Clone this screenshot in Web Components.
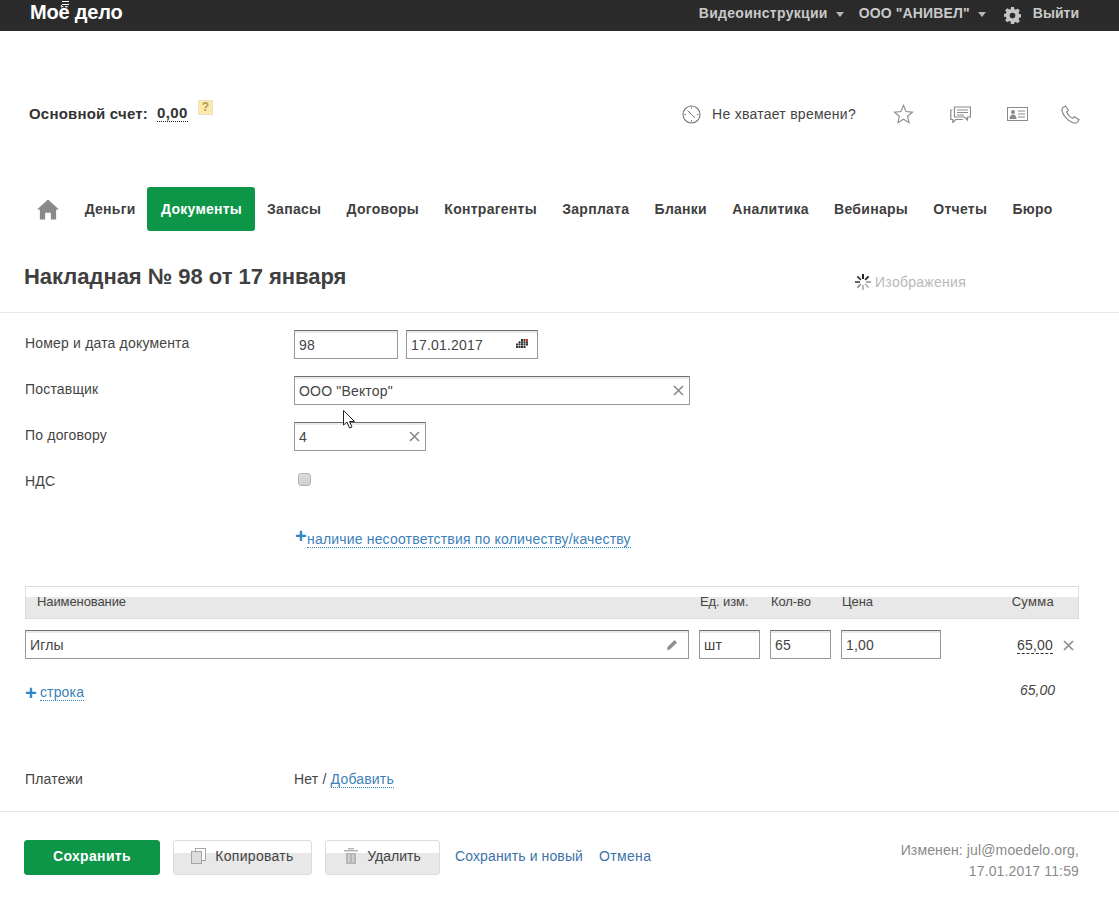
<!DOCTYPE html>
<html lang="ru"><head><meta charset="utf-8"><title>Накладная</title>
<style>
html,body{margin:0;padding:0;background:#fff}
body{font:14px "Liberation Sans",Arial,sans-serif;letter-spacing:.18px;color:#3f3f3f;width:1119px;height:915px;overflow:hidden;position:relative}
</style></head><body>
<app-topbar></app-topbar>
<app-balance></app-balance>
<app-nav></app-nav>
<doc-title></doc-title>
<doc-form></doc-form>
<doc-table></doc-table>
<doc-payments></doc-payments>
<doc-footer></doc-footer>
<mouse-cursor></mouse-cursor>
<script>
function def(name, html){
  customElements.define(name, class extends HTMLElement{
    constructor(){super();this.attachShadow({mode:'open'}).innerHTML=html;}
  });
}
const X='<svg width="11" height="11" viewBox="0 0 11 11"><path d="M1 1l9 9M10 1l-9 9" stroke="#8a8a8a" stroke-width="1.6" fill="none"/></svg>';

def('text-field',`<style>
:host{display:flex;box-sizing:border-box;height:29px;align-items:center;justify-content:space-between;padding:0 5px 0 4px;background:#fff;border:1px solid #999;border-top-color:#707070;box-shadow:inset 0 2px 0 #e9e9e9;font-size:14px;color:#444;white-space:nowrap}
</style><slot></slot><slot name="end"></slot>`);

def('dash-link',`<style>
:host{display:inline-block;color:#3d7fb8;line-height:15px;border-bottom:1px dotted #2f86c5;white-space:nowrap}
</style><slot></slot>`);

def('app-topbar',`<style>
:host{display:flex;align-items:center;justify-content:space-between;height:31px;background:#2b2b2b;padding:0 40px 0 30px;box-sizing:border-box}
.logo{color:#fff;font-weight:bold;font-size:20px;letter-spacing:-.2px;position:relative;top:-3px;white-space:nowrap}
.bars{position:absolute;left:32px;top:-3px;width:7px;height:8px;background:#2b2b2b;background-image:repeating-linear-gradient(#fff 0,#fff 1px,#2b2b2b 1px,#2b2b2b 3px)}
nav{display:flex;align-items:center;font-weight:bold;font-size:14px;color:#c9c9c9;position:relative;top:-3px}
.c{width:0;height:0;border:4px solid transparent;border-top:5px solid #b8b8b8;border-bottom:0;margin:3px 0 0 8px}
svg{display:block}
</style>
<div class="logo">Моё дело<i class="bars"></i></div>
<nav><span style="letter-spacing:.28px">Видеоинструкции</span><i class="c"></i><span style="margin-left:15px;letter-spacing:.15px">ООО "АНИВЕЛ"</span><i class="c"></i>
<svg style="margin:5px 0 0 18px" width="17" height="17" viewBox="0 0 18 18"><path fill="#c4c4c4" fill-rule="evenodd" d="M7.4 0h3.200l.4 2.400 1.500.6 2-1.400 2.300 2.300-1.400 2 .6 1.500 2.400.4v3.200l-2.400.4-.6 1.500 1.400 2-2.300 2.300-2-1.400-1.500.6-.4 2.400H7.400L7 15.400l-1.500-.6-2 1.400-2.300-2.300 1.400-2-.6-1.500L-.4 10.600V7.400l2.400-.4.6-1.500-1.400-2 2.300-2.300 2 1.400L7 2.400zM9 6a3 3 0 100 6 3 3 0 000-6z"/></svg>
<span style="margin-left:12px;letter-spacing:0">Выйти</span></nav>`);

def('app-balance',`<style>
:host{display:flex;align-items:center;justify-content:space-between;height:70px;margin-top:47px;padding:0 39px 0 29px;box-sizing:border-box}
.l{display:flex;align-items:center;font-weight:bold;font-size:15px;letter-spacing:.2px;color:#333}
.v{margin-left:9px;border-bottom:1px dotted #222;line-height:16px;color:#333;letter-spacing:.4px}
.q{width:15px;height:15px;margin:-12px 0 0 10px;background:#fbe9ae;border:1px solid #f0e2bb;border-bottom-color:#e3e0d6;box-sizing:border-box;font-size:12px;line-height:13px;text-align:center;color:#b39a50;letter-spacing:0}
.r{display:flex;align-items:center;color:#444;margin-top:2px;letter-spacing:.26px}
svg{display:block}
</style>
<div class="l"><span>Основной счет:</span><span class="v">0,00</span><span class="q">?</span></div>
<div class="r">
<svg width="19" height="19" viewBox="0 0 19 19" fill="none" stroke="#777"><circle cx="9.500" cy="9.500" r="8.500" stroke-width="1.100"/><path d="M9.500 2.500v1.500M9.500 15v1.500M2.500 9.500H4M15 9.500h1.500M9.500 9.500L5.500 5.500M9.500 9.500l3.500 3" stroke-width="1"/></svg>
<span style="margin-left:11px">Не хватает времени?</span>
<svg style="margin-left:37px" width="21" height="20" viewBox="0 0 21 20" fill="none" stroke="#8a8a8a" stroke-width="1.100"><path d="M10.500 1.500l2.600 6 6.400.6-4.900 4.200 1.500 6.300-5.600-3.400-5.600 3.400 1.500-6.300L1.500 8.100l6.400-.6z"/></svg>
<svg style="margin-left:36px" width="21" height="17" viewBox="0 0 21 17" fill="none" stroke="#8a8a8a" stroke-width="1.200"><path d="M4.500 1h16v10h-3v3l-3-3h-10z"/><path d="M7 4h11M7 6.500h11M7 9h7"/><path d="M2.500 4H.8v9.500h2v3l3-3h7"/></svg>
<svg style="margin-left:36px" width="21" height="14" viewBox="0 0 21 14"><rect x=".5" y=".5" width="20" height="13" fill="none" stroke="#8a8a8a"/><circle cx="6" cy="5" r="2" fill="#8a8a8a"/><path d="M2.500 12c0-6 7-6 7 0z" fill="#8a8a8a"/><path d="M11 4h7M11 7h7M11 10h7" stroke="#8a8a8a"/></svg>
<svg style="margin-left:33px" width="19" height="19" viewBox="0 0 19 19" fill="none" stroke="#8a8a8a" stroke-width="1.200"><path d="M2 2.500L4.500 1l3 4.500-1.800 1.500c.5 2 3.500 5.500 6 6.300l1.700-1.600 4.600 3-1.500 2.500c-1 1.200-3 1.200-5.500 0C6 15 2 10 1 6c-.3-1.500.2-2.700 1-3.500z"/></svg>
</div>`);

def('app-nav',`<style>
:host{display:flex;align-items:center;height:44px;margin-top:39px;padding-left:37px;box-sizing:border-box;font-weight:bold;color:#3f3f3f;white-space:nowrap;letter-spacing:.27px}
a{display:block;padding:0 12.650px;line-height:44px}
a.on{background:#0d9648;color:#fff;border-radius:3px;padding:0 13px 0 14px;letter-spacing:.25px}
svg{display:block;margin-right:13px}
</style>
<svg width="22" height="21" viewBox="0 0 23 21"><path fill="#8a8a8a" d="M11.500 0L23 10.500h-3V21h-5.500v-7h-6v7H3V10.500H0z"/></svg>
<a style="padding-right:11.400px">Деньги</a><a class="on">Документы</a><a style="padding-left:12px">Запасы</a><a>Договоры</a><a>Контрагенты</a><a>Зарплата</a><a>Бланки</a><a>Аналитика</a><a>Вебинары</a><a>Отчеты</a><a>Бюро</a>`);

let spokes='';for(let i=0;i<8;i++){const c=['#222','#333','#aaa','#bbb','#bbb','#999','#666','#444'][i];spokes+=`<rect x="7" y="0" width="2" height="5" fill="${c}" transform="rotate(${i*45} 8 8)"/>`;}
def('doc-title',`<style>
:host{display:flex;align-items:center;justify-content:space-between;height:82px;padding:10px 153px 0 24px;box-sizing:border-box;border-bottom:1px solid #e6e6e6}
h1{margin:0;font:bold 22px "Liberation Sans",Arial,sans-serif;letter-spacing:-.03px;color:#404040}
.i{display:flex;align-items:center;color:#b9b9b9;font-size:14px;margin-top:10px;letter-spacing:.27px}
svg{margin-right:4px}
</style><h1>Накладная № 98 от 17 января</h1><div class="i"><svg width="16" height="16" viewBox="0 0 16 16">${spokes}</svg>Изображения</div>`);

def('doc-form',`<style>
:host{display:grid;grid-template-columns:269px 1fr;row-gap:17px;padding:17px 0 0 25px;align-items:center}
label{color:#444;margin-top:-3px}
.f{display:flex;gap:8px}
.cb{width:13px;height:13px;box-sizing:border-box;margin:-6px 0 0 4px;border:1px solid #b5b5b5;border-radius:3px;background:linear-gradient(#dcdcdc,#cfcfcf)}
.p{grid-column:2;margin-top:15px;display:flex;align-items:flex-end;height:19px}
.plus{color:#2f86c5;font-size:20px;line-height:16px;font-weight:bold;margin:0 0 4px 1px;width:12px}
svg{display:block}
</style>
<label style="margin-top:-4px">Номер и дата документа</label>
<div class="f"><text-field style="width:104px">98</text-field><text-field style="width:132px">17.01.2017
<svg slot="end" style="margin:-2px 3px 0 0" width="13" height="9" viewBox="0 0 13 9"><g fill="#333"><path d="M5 0h2v2H5zM7.500 0h2v2h-2zM2.500 2.300h2v2h-2zM5 2.300h2v2H5zM7.500 2.300h2v2h-2zM10 2.300h2v2h-2zM0 4.600h2v2H0zM2.500 4.600h2v2h-2zM5 4.600h2v2H5zM7.500 4.600h2v2h-2zM10 4.600h2v2h-2zM0 6.900h2v2H0zM2.500 6.900h2v2h-2zM5 6.900h2v2H5zM7.500 6.900h2v2h-2z"/></g><path d="M10 0h2v2h-2z" fill="#e22"/></svg></text-field></div>
<label>Поставщик</label>
<text-field style="width:396px">ООО "Вектор"<span slot="end" style="display:block;height:11px;line-height:0">${X}</span></text-field>
<label>По договору</label>
<text-field style="width:132px">4<span slot="end" style="display:block;height:11px;line-height:0">${X}</span></text-field>
<label style="margin-top:-3px">НДС</label>
<div style="height:29px;display:flex;align-items:center"><div class="cb"></div></div>
<div class="p"><span class="plus">+</span><dash-link>наличие несоответствия по количеству/качеству</dash-link></div>`);

def('doc-table',`<style>
:host{display:block;margin:38px 40px 0 25px;font-size:14px}
.h{display:grid;grid-template-columns:664px 10px 61px 10px 61px 10px 100px 1fr;height:33px;box-sizing:border-box;border:1px solid #ddd;background:linear-gradient(#fff 0,#fff 10px,#e8e8e8 10px);color:#444;line-height:30px;font-size:13px;letter-spacing:-.1px}
.h span{white-space:nowrap}
.r{display:grid;grid-template-columns:664px 10px 61px 10px 61px 10px 100px 1fr;margin-top:11px;height:29px}
.s{display:flex;align-items:center;justify-content:flex-end}
.s b{font-weight:normal;border-bottom:1px dashed #333;line-height:15px;margin-top:2px}
.t{display:flex;justify-content:space-between;margin-top:19px;height:30px;align-items:center}
.plus{color:#2f86c5;font-size:20px;font-weight:bold;line-height:16px;margin-right:3px}
.t>div{display:flex;align-items:center}
svg{display:block}
i{color:#444;margin-right:24px;margin-top:-6px;letter-spacing:0}
</style>
<div class="h"><span style="padding-left:11px">Наименование</span><span></span><span>Ед. изм.</span><span></span><span>Кол-во</span><span></span><span>Цена</span><span style="text-align:right;padding-right:24px;letter-spacing:.3px">Сумма</span></div>
<div class="r"><text-field>Иглы<svg slot="end" style="margin-right:5px" width="12" height="12" viewBox="0 0 12 12"><path d="M8.500 1l2.500 2.500L4 10.500 1 11l.5-3z" fill="#8f8f8f"/></svg></text-field><span></span><text-field>шт</text-field><span></span><text-field>65</text-field><span></span><text-field>1,00</text-field>
<div class="s"><b>65,00</b><svg style="margin:2px 5px 0 10px" width="11" height="11" viewBox="0 0 11 11"><path d="M1 1l9 9M10 1l-9 9" stroke="#8a8a8a" stroke-width="1.600" fill="none"/></svg></div></div>
<div class="t"><div><span class="plus">+</span><dash-link>строка</dash-link></div><i>65,00</i></div>`);

def('doc-payments',`<style>
:host{display:grid;grid-template-columns:269px 1fr;margin-top:63px;padding:0 0 23px 25px;border-bottom:1px solid #e6e6e6;line-height:16px;color:#444}
</style><span>Платежи</span><span>Нет / <dash-link>Добавить</dash-link></span>`);

def('doc-button',`<style>
:host{display:flex;align-items:center;justify-content:center;height:35px;box-sizing:border-box;padding-bottom:3px;border:1px solid #dcdcdc;border-radius:3px;background:linear-gradient(#fff 0,#fff 12px,#e8e8e8 12px);color:#444;white-space:nowrap}
:host([primary]){background:#0d9648;border-color:#0d9648;color:#fff;font-weight:bold;letter-spacing:.33px}
</style><slot></slot>`);

def('doc-footer',`<style>
:host{display:flex;align-items:flex-start;justify-content:space-between;margin-top:28px;padding:0 40px 0 24px}
.l{display:flex;align-items:center;gap:13px}
a{color:#3d72a8;white-space:nowrap;margin-top:-3px}
.m{text-align:right;color:#8a8a8a;line-height:21px;letter-spacing:.14px}
svg{display:block;margin-right:9px}
</style>
<div class="l"><doc-button primary style="width:136px">Сохранить</doc-button>
<doc-button style="width:139px;letter-spacing:.3px"><svg width="15" height="16" viewBox="0 0 15 16" fill="#fff" stroke="#a5a5a5"><rect x="4.500" y=".5" width="10" height="12"/><rect x=".5" y="3.500" width="10" height="12" fill="#dcdcdc"/></svg>Копировать</doc-button>
<doc-button style="width:115px;letter-spacing:0"><svg width="14" height="16" viewBox="0 0 14 16" fill="#b5b5b5"><rect y="2" width="14" height="1.500"/><rect x="4" width="6" height="1.500"/><path d="M2 5h10v11H2zM4.500 6.500v8h1v-8zM8.500 6.500v8h1v-8z" fill-rule="evenodd"/></svg>Удалить</doc-button>
<a style="margin-left:2px;letter-spacing:.12px">Сохранить и новый</a><a style="margin-left:3px;letter-spacing:.33px">Отмена</a></div>
<div class="m">Изменен: jul@moedelo.org,<br>17.01.2017 11:59</div>`);

def('mouse-cursor',`<style>
:host{position:absolute;left:343px;top:410px;display:block;width:14px;height:20px}
</style><svg width="14" height="20" viewBox="0 0 14 20"><path d="M.5.500V15l3.500-3 2.500 6 2.500-1-2.500-5.500h5z" fill="#fff" stroke="#222"/></svg>`);
</script>
</body></html>
